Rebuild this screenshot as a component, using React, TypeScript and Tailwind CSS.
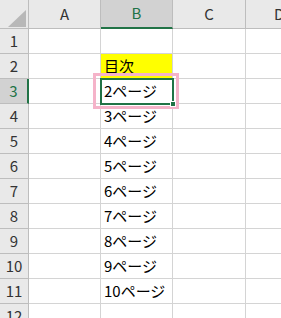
import React from 'react';

const FONT = { fontFamily: '"Noto Sans CJK JP", "Noto Sans", sans-serif' };

const rows: { n: number; b: string }[] = [
  { n: 1, b: '' },
  { n: 2, b: '目次' },
  { n: 3, b: '2ページ' },
  { n: 4, b: '3ページ' },
  { n: 5, b: '4ページ' },
  { n: 6, b: '5ページ' },
  { n: 7, b: '6ページ' },
  { n: 8, b: '7ページ' },
  { n: 9, b: '8ページ' },
  { n: 10, b: '9ページ' },
  { n: 11, b: '10ページ' },
  { n: 12, b: '' },
];

function Row({ n, b }: { n: number; b: string }) {
  const active = n === 3;
  return (
    <div className="flex h-[25px] shrink-0">
      <div
        className={`w-[29px] shrink-0 flex items-center justify-center border-r border-b text-[15px] ${
          active
            ? 'bg-[#d2d2d2] text-[#217346] border-r-2 border-r-[#217346] border-b-[#bdbdbd]'
            : 'bg-[#e9e9e9] text-[#333] border-[#bdbdbd]'
        }`}
      >
        {n}
      </div>
      <div className="w-[72px] shrink-0 border-r border-b border-[#d4d4d4] bg-white" />
      <div
        className={`w-[72px] shrink-0 border-r border-b border-[#d4d4d4] flex items-end pl-[3px] pb-[1px] text-[15px] text-black whitespace-nowrap ${
          n === 2 ? 'bg-[#ffff00]' : 'bg-white'
        }`}
      >
        {b}
      </div>
      <div className="w-[73px] shrink-0 border-r border-b border-[#d4d4d4] bg-white" />
      <div className="flex-1 border-b border-[#d4d4d4] bg-white" />
    </div>
  );
}

export default function App() {
  return (
    <div className="relative w-[281px] h-[318px] overflow-hidden bg-white select-none" style={FONT}>
      {/* column headers */}
      <div className="flex h-[29px]">
        <div className="relative w-[29px] shrink-0 bg-[#e9e9e9] border-r border-b border-[#bdbdbd]">
          <svg className="absolute left-[8px] top-[10px]" width="18" height="17" viewBox="0 0 18 17">
            <polygon points="18,0 18,17 0,17" fill="#b8b8b8" />
          </svg>
        </div>
        <div className="w-[72px] shrink-0 bg-[#e9e9e9] border-r border-b border-[#bdbdbd] flex items-center justify-center text-[15px] text-[#333]">
          A
        </div>
        <div className="w-[72px] shrink-0 bg-[#d2d2d2] border-r border-[#bdbdbd] border-b-2 border-b-[#217346] flex items-center justify-center text-[15px] text-[#217346]">
          B
        </div>
        <div className="w-[73px] shrink-0 bg-[#e9e9e9] border-r border-b border-[#bdbdbd] flex items-center justify-center text-[15px] text-[#333]">
          C
        </div>
        <div className="flex-1 bg-[#e9e9e9] border-b border-[#bdbdbd] flex items-center pl-[28px] text-[15px] text-[#333]">
          D
        </div>
      </div>

      {rows.map((r) => (
        <Row key={r.n} n={r.n} b={r.b} />
      ))}

      {/* pink annotation frame */}
      <div className="absolute left-[93px] top-[73px] w-[86px] h-[36px] border-[3px] border-[#f5b3c9] pointer-events-none" />
      {/* active cell selection */}
      <div className="absolute left-[100px] top-[78px] w-[74px] h-[27px] border-2 border-[#217346] pointer-events-none" />
      <div className="absolute left-[170px] top-[101px] w-[6px] h-[6px] bg-[#217346] border border-white pointer-events-none" />
    </div>
  );
}
